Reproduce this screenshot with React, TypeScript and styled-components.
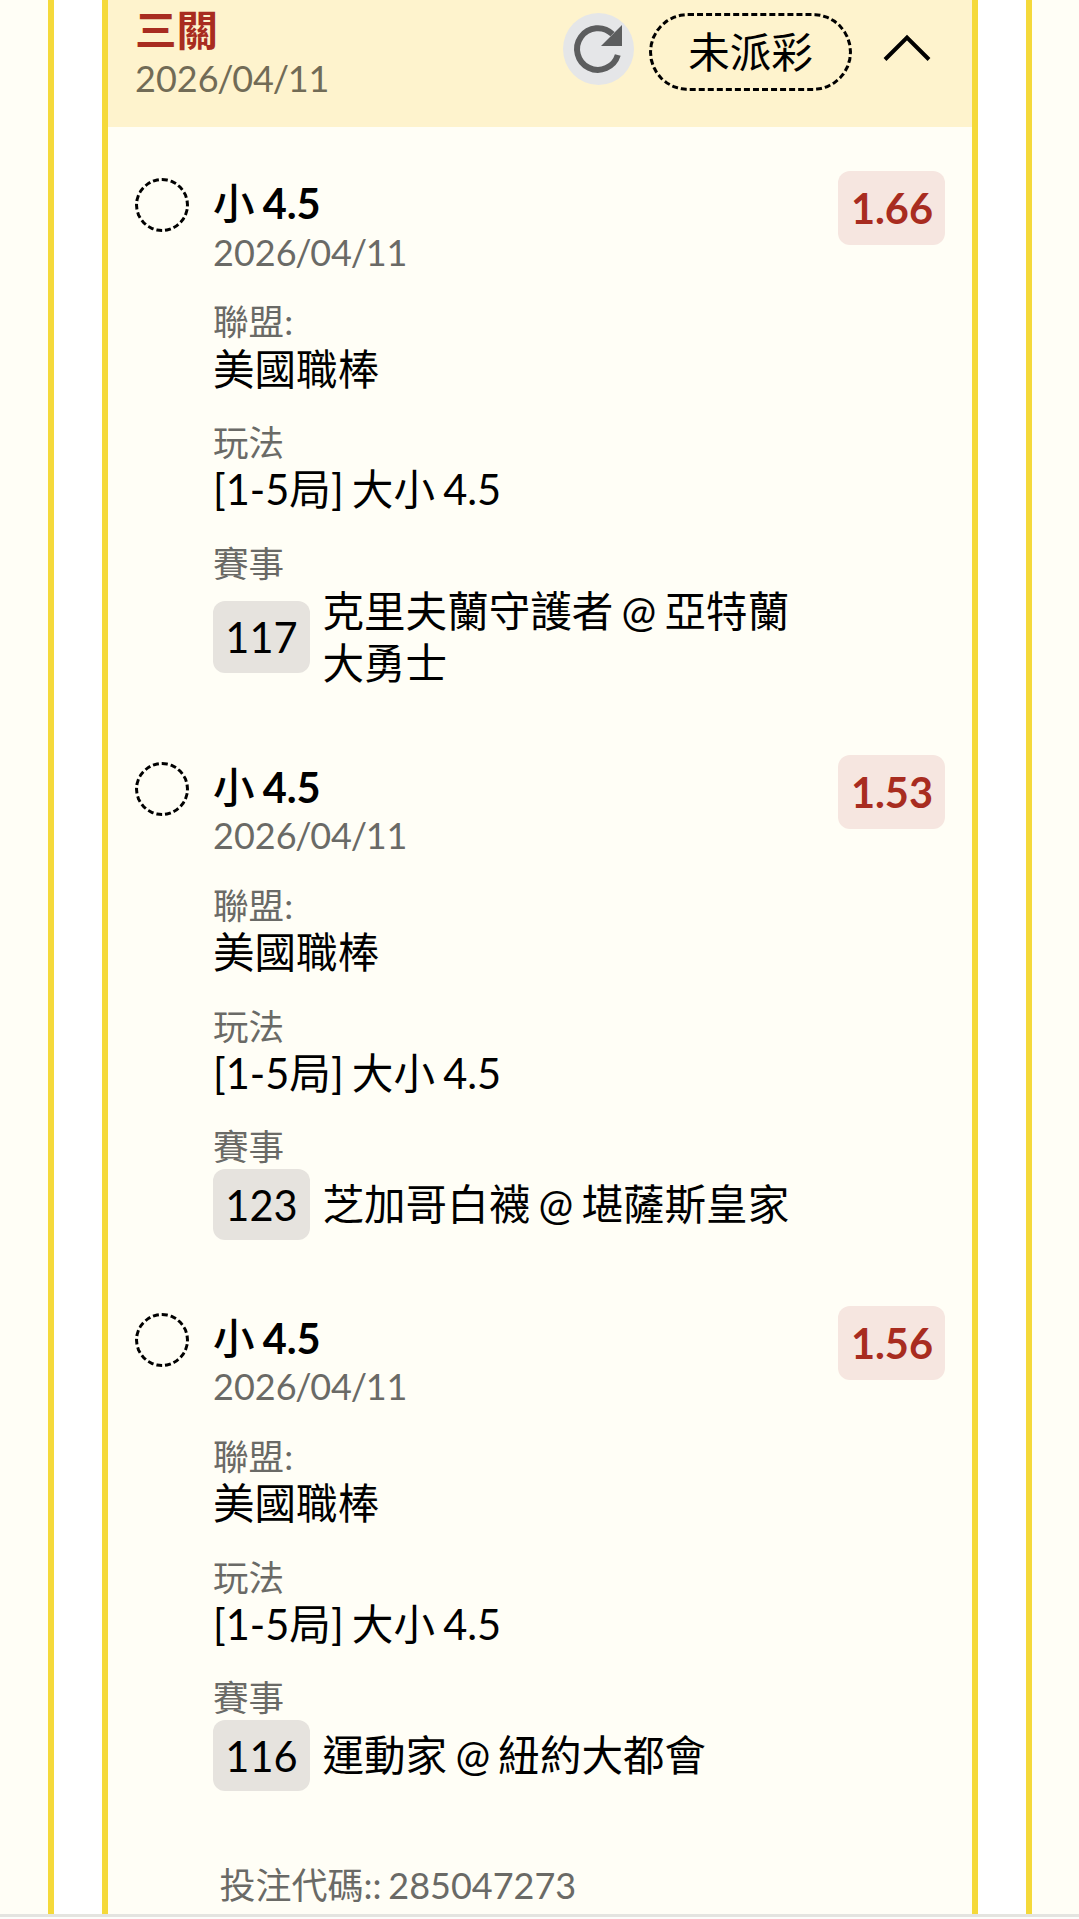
import React from 'react';
import styled, { createGlobalStyle } from 'styled-components';

const GlobalStyle = createGlobalStyle`
  * { box-sizing: border-box; }
  body {
    margin: 0;
    background: #fff;
    font-family: Lato, "Noto Sans CJK TC", sans-serif;
    font-size: 41.55px;
    line-height: 51.6px;
    word-spacing: -2.4px;
    color: #000;
  }
`;

const Screen = styled.div`
  height: 1919px;
  display: flex;
  flex-direction: column;
  overflow: hidden;
`;

const Page = styled.div`
  flex: 1;
  min-height: 0;
  padding: 0 47px 0 48px;
  background: #fffef6;
`;

const Outer = styled.div`
  height: 100%;
  padding: 0 48px;
  background: #fff;
  border: solid #f5d93a;
  border-width: 0 6px;
`;

const Card = styled.article`
  height: 100%;
  background: #fffef6;
  border: solid #f5d93a;
  border-width: 0 6px;
`;

const BottomEdge = styled.div`
  height: 5px;
  flex: none;
  background: #fdfdfb;
  border-top: 3px solid #e4e4e0;
`;

const Header = styled.header`
  height: 127px;
  padding: 5px 41px 0 27px;
  display: flex;
  align-items: flex-start;
  background: #fef3cd;
`;

const HeaderTitle = styled.div`
  flex: 1;
`;

const Combo = styled.div`
  font-weight: 700;
  line-height: 51px;
  color: #a82c20;
`;

const DateLine = styled.div<{ $onHeader?: boolean }>`
  font-size: 36px;
  line-height: 45px;
  color: ${(p) => (p.$onHeader ? '#716b56' : '#6a6a66')};
`;

const Slash = styled.span`
  letter-spacing: -1.4px;
  margin-left: -1.2px;
`;

const RefreshButton = styled.button`
  width: 71px;
  height: 72px;
  margin: 8px 15.5px 0 0;
  padding: 0;
  border: 0;
  border-radius: 50%;
  background: #e5e6e8;
  svg { display: block; }
`;

const Status = styled.div`
  width: 203px;
  height: 78px;
  margin: 8px 31px 0 0;
  padding-top: 1px;
  border: 3px dashed #000;
  border-radius: 39px;
  display: flex;
  align-items: center;
  justify-content: center;
`;

const Caret = styled.svg`
  width: 48px;
  height: 30px;
  margin-top: 28px;
`;

const Legs = styled.div`
  padding: 44px 27px 0;
  display: flex;
  flex-direction: column;
  gap: 65.4px;
`;

const Leg = styled.section`
  display: flex;
  align-items: flex-start;
`;

const Marker = styled.span`
  width: 54px;
  height: 54px;
  margin: 7px 24px 0 0;
  border: 3px dashed #000;
  border-radius: 50%;
  flex: none;
`;

const Details = styled.div`
  width: 590px;
  padding-top: 7px;
`;

const Pick = styled.div`
  font-weight: 500;
`;

const Line = styled.span`
  font-weight: 700;
`;

const Field = styled.div`
  margin-top: 25.6px;
`;

const Label = styled.div`
  font-size: 35.6px;
  line-height: 43.5px;
  color: #6a6a66;
`;

const Match = styled.div`
  display: flex;
  align-items: center;
`;

const MatchNo = styled.span`
  flex: none;
  height: 71.6px;
  width: 97px;
  margin-right: 12.5px;
  line-height: 72px;
  text-align: center;
  border-radius: 12px;
  background: #e6e3de;
`;

const Teams = styled.span`
  padding-top: 1px;
`;

const Odds = styled.span`
  width: 107px;
  height: 74px;
  margin-left: auto;
  padding-left: 1px;
  line-height: 75px;
  text-align: center;
  font-weight: 700;
  border-radius: 12px;
  color: #a82c20;
  background: #f6e6e0;
`;

const BetCode = styled.div`
  margin: 71.6px 0 0 111.5px;
  font-size: 36px;
  line-height: 44px;
  color: #6a6a66;
`;

const legs = [
  { no: '117', teams: '克里夫蘭守護者 @ 亞特蘭大勇士', odds: '1.66' },
  { no: '123', teams: '芝加哥白襪 @ 堪薩斯皇家', odds: '1.53' },
  { no: '116', teams: '運動家 @ 紐約大都會', odds: '1.56' },
];

function DateText({ value, onHeader }: { value: string; onHeader?: boolean }) {
  return (
    <DateLine $onHeader={onHeader}>
      {value.split('/').map((part, i) => (
        <React.Fragment key={i}>
          {i > 0 && <Slash>/</Slash>}
          {part}
        </React.Fragment>
      ))}
    </DateLine>
  );
}

export default function App() {
  return (
    <Screen>
      <GlobalStyle />
      <Page>
        <Outer>
          <Card>
            <Header>
              <HeaderTitle>
                <Combo>三關</Combo>
                <DateText value="2026/04/11" onHeader />
              </HeaderTitle>
              <RefreshButton aria-label="重新整理">
                <svg width="71" height="72" viewBox="0 0 71 72">
                  <path
                    d="M54.8 42A20.8 20.8 0 1 1 49.5 21.2"
                    fill="none"
                    stroke="#5c5d5e"
                    strokeWidth="6"
                  />
                  <path d="M59 12V33H38Z" fill="#5c5d5e" />
                </svg>
              </RefreshButton>
              <Status>未派彩</Status>
              <Caret viewBox="0 0 48 30" fill="none" stroke="#000" strokeWidth="4">
                <path d="M2 26.5L24 4.5L46 26.5" />
              </Caret>
            </Header>
            <Legs>
              {legs.map((leg) => (
                <Leg key={leg.no}>
                  <Marker />
                  <Details>
                    <Pick>
                      小 <Line>4.5</Line>
                    </Pick>
                    <DateText value="2026/04/11" />
                    <Field>
                      <Label>聯盟:</Label>
                      <div>美國職棒</div>
                    </Field>
                    <Field>
                      <Label>玩法</Label>
                      <div>[1-5局] 大小 4.5</div>
                    </Field>
                    <Field>
                      <Label>賽事</Label>
                      <Match>
                        <MatchNo>{leg.no}</MatchNo>
                        <Teams>{leg.teams}</Teams>
                      </Match>
                    </Field>
                  </Details>
                  <Odds>{leg.odds}</Odds>
                </Leg>
              ))}
            </Legs>
            <BetCode>投注代碼:: 285047273</BetCode>
          </Card>
        </Outer>
      </Page>
      <BottomEdge />
    </Screen>
  );
}
